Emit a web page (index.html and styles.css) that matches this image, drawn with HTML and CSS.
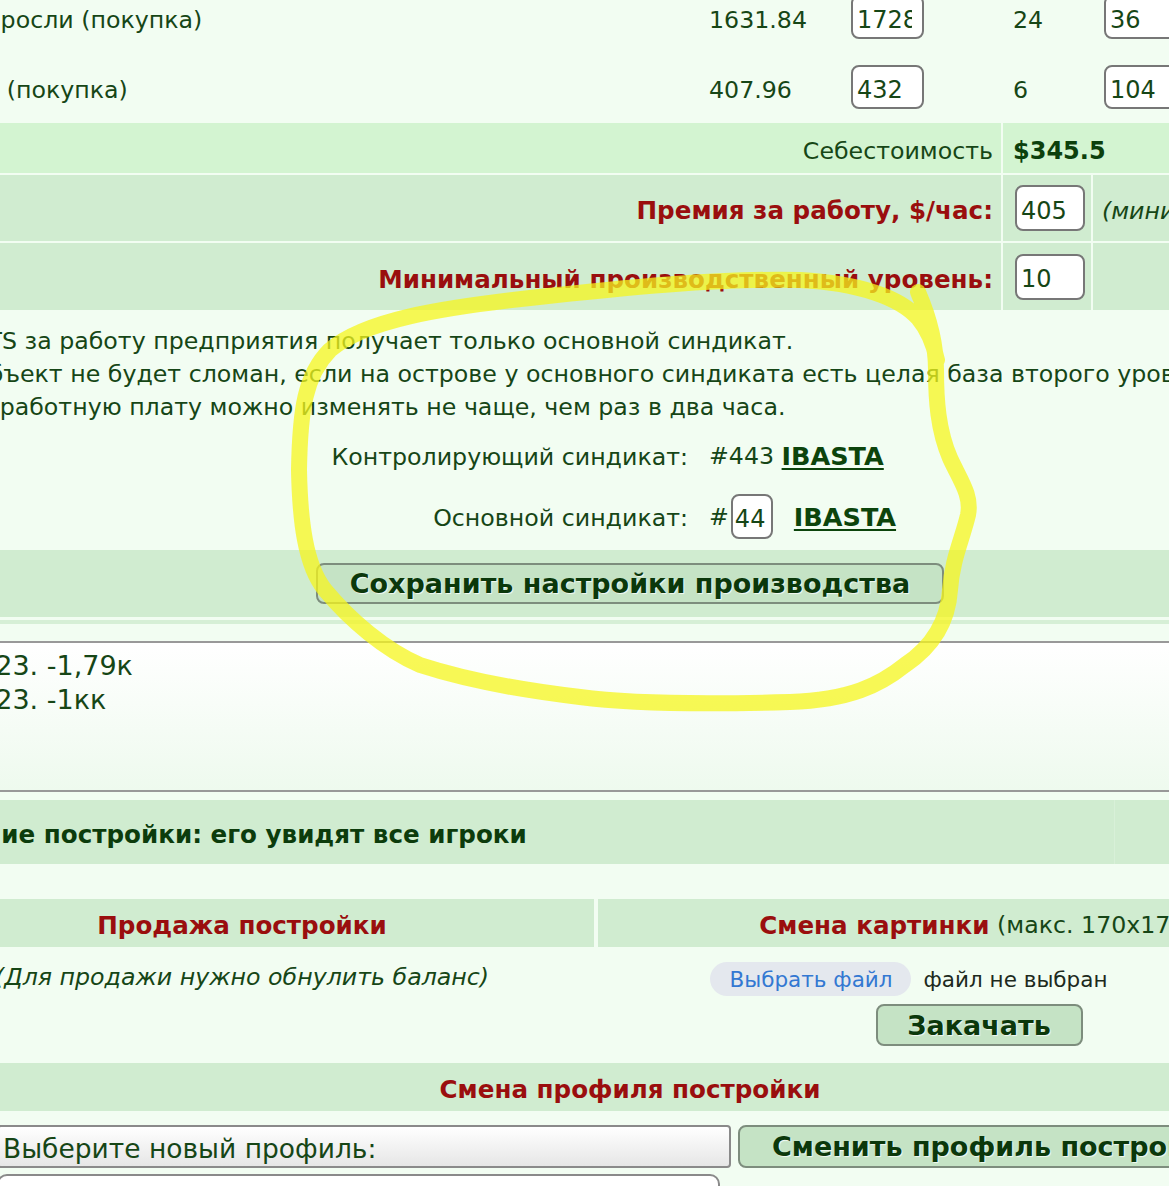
FILE: index.html
```html
<!DOCTYPE html>
<html lang="ru">
<head>
  <meta charset="UTF-8">
  <title>Управление постройкой</title>
  <link rel="stylesheet" href="styles.css">
</head>
<body>
  <div class="page">

    <div class="costs">
      <div class="cell name">Водоросли (покупка)</div>
      <div class="cell num">1631.84</div>
      <div class="cell in3"><input class="fld w73 clip" value="1728"></div>
      <div class="cell in4 txt">24</div>
      <div class="cell in5"><input class="fld w73" value="36"></div>

      <div class="cell name">Соль (покупка)</div>
      <div class="cell num">407.96</div>
      <div class="cell in3"><input class="fld w73" value="432"></div>
      <div class="cell in4 txt">6</div>
      <div class="cell in5"><input class="fld w73" value="104"></div>

      <div class="cell lite label span3">Себестоимость</div>
      <div class="cell lite in4 txt span2"><b class="price">$345.5</b></div>

      <div class="cell hd label span3 red">Премия за работу, $/час:</div>
      <div class="cell hd in4b"><input class="fld w70" value="405"></div>
      <div class="cell hd hint">(минимум $300 в час)</div>

      <div class="cell hd label span3 red">Минимальный производственный уровень:</div>
      <div class="cell hd in4b"><input class="fld w70" value="10"></div>
      <div class="cell hd"></div>
    </div>

    <div class="notes">
      <div>GTS за работу предприятия получает только основной синдикат.</div>
      <div>Объект не будет сломан, если на острове у основного синдиката есть целая база второго уровня.</div>
      <div>Заработную плату можно изменять не чаще, чем раз в два часа.</div>
    </div>

    <div class="synd">
      <div class="synd-label">Контролирующий синдикат:</div>
      <div class="synd-value">#443&nbsp;<a href="#">IBASTA</a></div>
      <div class="synd-label">Основной синдикат:</div>
      <div class="synd-value">#<input class="fld w42" value="44"><a class="gap" href="#">IBASTA</a></div>
    </div>

    <div class="save-row">
      <button class="btn save">Сохранить настройки производства</button>
    </div>
    <div class="stripe"></div>

    <div class="log">
      <div>12.05.2023. -1,79к</div>
      <div>14.05.2023. -1кк</div>
    </div>

    <div class="desc">
      <span>Описание постройки: его увидят все игроки</span>
      <span class="desc-end"></span>
    </div>

    <div class="twocol">
      <div class="hd head red">Продажа постройки</div>
      <div class="hd head pic-head"><span class="red">Смена картинки</span>&nbsp;(макс. 170x170)</div>
      <div class="sell">(Для продажи нужно обнулить баланс)</div>
      <div class="upload">
        <div class="file-row">
          <span class="file-btn">Выбрать файл</span>
          <span class="file-name">файл не выбран</span>
        </div>
        <button class="btn upload-btn">Закачать</button>
      </div>
    </div>

    <div class="hd profile-head red">Смена профиля постройки</div>

    <div class="profile-row">
      <div class="select">Выберите новый профиль:</div>
      <button class="btn change">Сменить профиль постройки</button>
    </div>
    <div class="select2"></div>

  </div>

  <svg class="scribble" width="1169" height="1186" viewBox="0 0 1169 1186">
    <path d="M 918 292
             C 928 315, 936 340, 936 370
             C 936 400, 938 430, 950 458
             C 960 480, 972 495, 968 515
             C 962 540, 952 560, 950 590
             C 948 620, 935 645, 905 665
             C 880 685, 850 700, 790 702
             C 720 704, 640 705, 580 697
             C 520 690, 460 678, 420 665
             C 385 650, 350 620, 325 590
             C 305 565, 300 520, 299 470
             C 300 410, 305 375, 330 350
             C 365 320, 440 308, 530 298
             C 620 288, 720 278, 800 280
             C 860 283, 900 298, 918 318
             C 928 330, 934 345, 937 360"/>
  </svg>
</body>
</html>
```

FILE: styles.css
```css
* {
  box-sizing: border-box;
  margin: 0;
  padding: 0;
}

body {
  font-family: 'DejaVu Sans', Verdana, sans-serif;
  font-size: 23.7px;
  color: #164616;
  background-color: #f2fdf2;
  overflow: hidden;
  position: relative;
  height: 1186px;
}

.page {
  width: 1500px;
  margin-left: -120px;
}

.red {
  color: #9a0e0e;
  font-weight: bold;
  font-size: 24.6px;
}

.hd {
  background-color: #d0ecd0;
}

.lite {
  background-color: #d3f4d1;
}

/* cost table */

.costs {
  display: grid;
  grid-template-columns: 818px 139px 160px 88px 1fr;
  grid-template-rows: 68px 68px 50px 66px 67px;
  gap: 2px;
  margin-top: -17px;
}

.cell {
  display: flex;
  align-items: center;
  white-space: nowrap;
}

.name {
  padding: 5px 0 0 59px;
}

.num {
  padding: 5px 0 0 9px;
}

.in3 {
  padding-left: 10px;
}

.in4 {
  padding-left: 10px;
}

.txt {
  padding-top: 5px;
}

.in4b {
  padding-left: 12px;
}

.in5 {
  padding-left: 11px;
}

.span3 {
  grid-column: span 3;
}

.span2 {
  grid-column: span 2;
}

.label {
  justify-content: flex-end;
  padding: 5px 8px 0 0;
}

.price {
  color: #0c400c;
  font-size: 24px;
}

.hint {
  font-style: italic;
  padding: 5px 0 0 9px;
}

.fld {
  font: inherit;
  font-size: 24px;
  color: #164616;
  height: 46px;
  border: 2px solid #777;
  border-radius: 8px;
  background: #fff;
  padding: 5px 4px 0;
}

.w73 {
  width: 73px;
  height: 44px;
}

.w70 {
  width: 70px;
}

.w42 {
  width: 42px;
  height: 45px;
  padding: 5px 2px 0;
  margin-left: 2px;
}

.clip {
  padding-right: 10px;
}

/* notes */

.notes {
  padding: 15px 0 0 90px;
  line-height: 33px;
  white-space: nowrap;
}

.synd {
  display: grid;
  grid-template-columns: 818px 1fr;
  grid-auto-rows: 61px;
  margin-top: 1px;
  white-space: nowrap;
}

.synd-label {
  display: flex;
  align-items: center;
  justify-content: flex-end;
  padding: 3px 10px 0 0;
}

.synd-value {
  display: flex;
  align-items: center;
  padding-left: 11px;
}

.synd a {
  color: #0c440c;
  font-weight: bold;
  font-size: 25.5px;
  text-decoration: underline;
  text-decoration-thickness: 2px;
  text-underline-offset: 3px;
}

.synd a.gap {
  margin-left: 21px;
}

/* buttons */

.btn {
  font-family: inherit;
  font-weight: bold;
  font-size: 27px;
  color: #0b380b;
  background-color: #c5e3c5;
  border: 2px solid #7d8d7d;
  border-radius: 8px;
  text-shadow: 1px 1px 1px rgba(255, 255, 255, 0.8);
  white-space: nowrap;
}

.save-row {
  height: 67px;
  margin-top: 3px;
  background-color: #d0ecd0;
  display: flex;
  justify-content: center;
  align-items: center;
}

.save {
  width: 628px;
  height: 41px;
}

.stripe {
  height: 4px;
  margin-top: 3px;
  background-color: #d6efd6;
}

/* log */

.log {
  margin-top: 17px;
  height: 151px;
  border-top: 2px solid #999;
  border-bottom: 2px solid #999;
  background: linear-gradient(#fff, #eefaee);
  padding-top: 6px;
  font-size: 27px;
  line-height: 34px;
  text-indent: -5px;
  white-space: nowrap;
}

.desc {
  margin-top: 8px;
  height: 64px;
  background-color: #d0ecd0;
  font-weight: bold;
  font-size: 24.6px;
  color: #0c3c0c;
  display: flex;
  align-items: center;
  justify-content: space-between;
  padding: 5px 0 0 18px;
  white-space: nowrap;
}

.desc-end {
  align-self: stretch;
  width: 266px;
  margin-top: -5px;
  border-left: 1px solid #d8f0d8;
}

/* sale / picture */

.twocol {
  display: grid;
  grid-template-columns: 704px 1fr;
  grid-template-rows: 48px 116px;
  column-gap: 4px;
  margin: 35px 0 0 10px;
  white-space: nowrap;
}

.head {
  display: flex;
  align-items: center;
  justify-content: center;
  padding-top: 4px;
}

.pic-head {
  padding-right: 24px;
}

.sell {
  font-style: italic;
  text-align: center;
  padding-top: 16px;
}

.upload {
  display: flex;
  flex-direction: column;
  align-items: center;
  padding-top: 15px;
}

.file-row {
  display: flex;
  align-items: center;
  gap: 12px;
  font-size: 21.5px;
  margin-right: 160px;
}

.file-btn {
  height: 34px;
  width: 201px;
  border-radius: 17px;
  background-color: #e4e8ee;
  color: #3378d2;
  display: flex;
  align-items: center;
  justify-content: center;
}

.file-name {
  color: #1d2a1d;
}

.upload-btn {
  width: 207px;
  height: 42px;
  margin-top: 8px;
  margin-left: -20px;
}

/* profile */

.profile-head {
  height: 48px;
  display: flex;
  align-items: center;
  justify-content: center;
  padding-top: 4px;
}

.profile-row {
  display: flex;
  gap: 7px;
  margin: 14px 0 0 117px;
}

.select {
  width: 734px;
  height: 43px;
  border: 2px solid #8a8a8a;
  border-radius: 4px;
  background: linear-gradient(#fff, #e6e6e6);
  padding: 3px 0 0 4px;
  font-size: 26.5px;
  display: flex;
  align-items: center;
}

.change {
  width: 480px;
  height: 43px;
  text-align: left;
  padding-left: 32px;
}

.select2 {
  width: 723px;
  height: 40px;
  margin: 6px 0 0 117px;
  border: 2px solid #8a8a8a;
  border-radius: 10px;
  background: #fff;
}

.scribble {
  position: absolute;
  left: 0;
  top: 0;
  pointer-events: none;
}

.scribble path {
  fill: none;
  stroke: rgba(246, 246, 30, 0.75);
  stroke-width: 16;
  stroke-linecap: round;
  stroke-linejoin: round;
}
```
